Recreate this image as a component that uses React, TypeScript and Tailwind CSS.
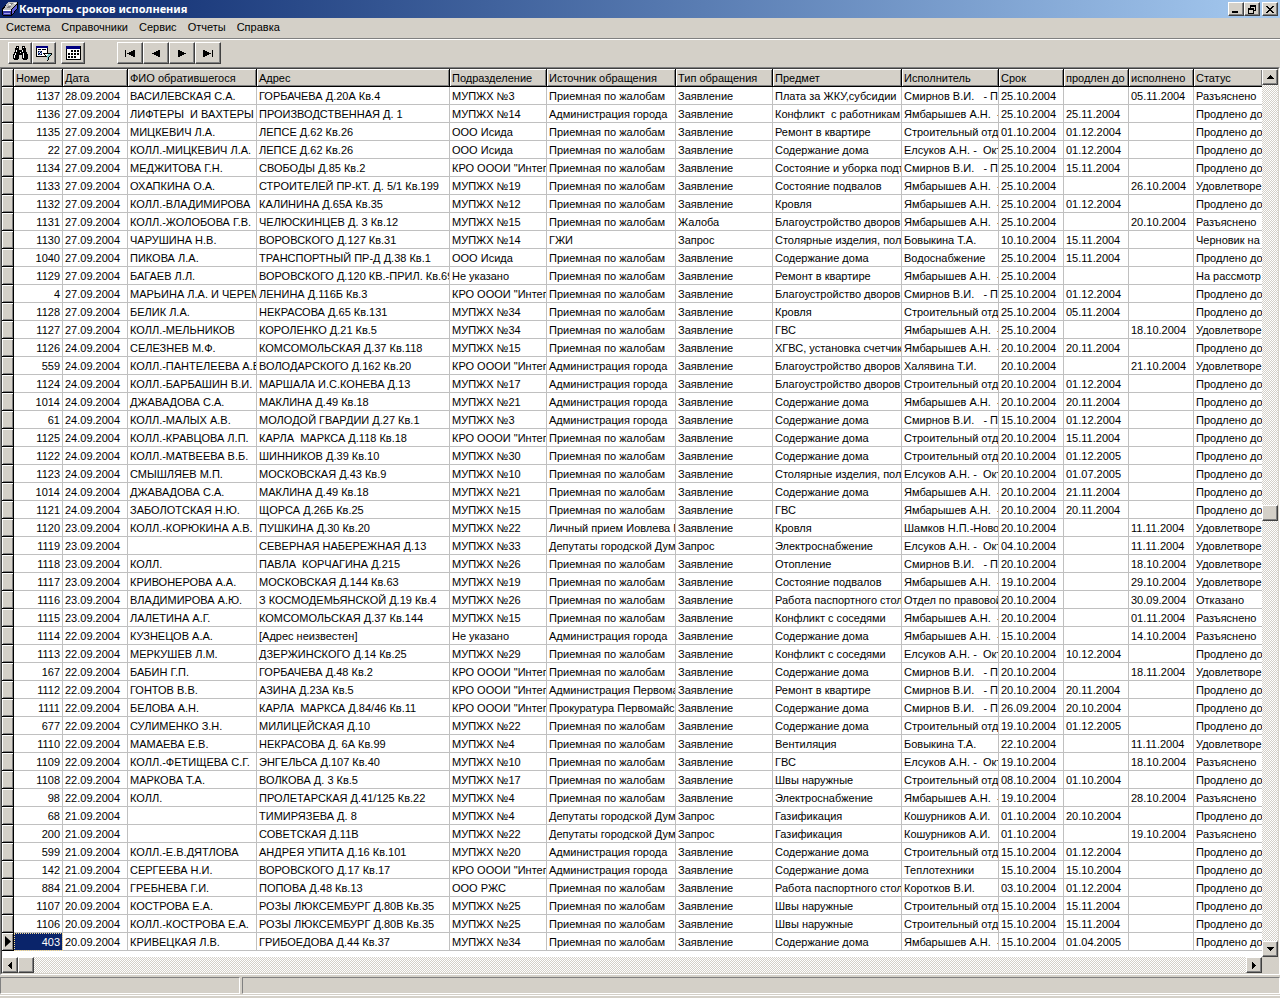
import type { ReactNode } from "react";
import clsx from "clsx";

type Column = { title: string; width: string };

const columns: Column[] = [
  { title: "Номер", width: "w-[49px]" },
  { title: "Дата", width: "w-[65px]" },
  { title: "ФИО обратившегося", width: "w-[129px]" },
  { title: "Адрес", width: "w-[193px]" },
  { title: "Подразделение", width: "w-[97px]" },
  { title: "Источник обращения", width: "w-[129px]" },
  { title: "Тип обращения", width: "w-[97px]" },
  { title: "Предмет", width: "w-[129px]" },
  { title: "Исполнитель", width: "w-[97px]" },
  { title: "Срок", width: "w-[65px]" },
  { title: "продлен до", width: "w-[65px]" },
  { title: "исполнено", width: "w-[65px]" },
  { title: "Статус", width: "" },
];

// values that repeat all over the journal
const PRIEM = "Приемная по жалобам";
const ADM = "Администрация города";
const DUMA = "Депутаты городской Дум";
const ZAYAV = "Заявление";
const ZAPROS = "Запрос";
const KRO = 'КРО ОООИ "Интег';
const DOM = "Содержание дома";
const DVOR = "Благоустройство дворов";
const REMONT = "Ремонт в квартире";
const STOL = "Столярные изделия, пол";
const PASPORT = "Работа паспортного стол";
const SMIRNOV = "Смирнов В.И.   - По";
const YAMB = "Ямбарышев А.Н.  -";
const STROI = "Строительный отд";
const ELSUKOV = "Елсуков А.Н. -  Окт";
const PRODL = "Продлено до";
const UDOVL = "Удовлетворе";
const RAZ = "Разъяснено";

const rows: string[][] = [
  ["1137", "28.09.2004", "ВАСИЛЕВСКАЯ С.А.", "ГОРБАЧЕВА Д.20А Кв.4", "МУПЖХ №3", PRIEM, ZAYAV, "Плата за ЖКУ,субсидии", SMIRNOV, "25.10.2004", "", "05.11.2004", RAZ],
  ["1136", "27.09.2004", "ЛИФТЕРЫ  И ВАХТЕРЫ", "ПРОИЗВОДСТВЕННАЯ Д. 1", "МУПЖХ №14", ADM, ZAYAV, "Конфликт  с работникам", YAMB, "25.10.2004", "25.11.2004", "", PRODL],
  ["1135", "27.09.2004", "МИЦКЕВИЧ Л.А.", "ЛЕПСЕ Д.62 Кв.26", "ООО Исида", PRIEM, ZAYAV, REMONT, STROI, "01.10.2004", "01.12.2004", "", PRODL],
  ["22", "27.09.2004", "КОЛЛ.-МИЦКЕВИЧ Л.А.", "ЛЕПСЕ Д.62 Кв.26", "ООО Исида", PRIEM, ZAYAV, DOM, ELSUKOV, "25.10.2004", "01.12.2004", "", PRODL],
  ["1134", "27.09.2004", "МЕДЖИТОВА Г.Н.", "СВОБОДЫ Д.85 Кв.2", KRO, PRIEM, ZAYAV, "Состояние и уборка подъ", SMIRNOV, "25.10.2004", "15.11.2004", "", PRODL],
  ["1133", "27.09.2004", "ОХАПКИНА О.А.", "СТРОИТЕЛЕЙ ПР-КТ. Д. 5/1 Кв.199", "МУПЖХ №19", PRIEM, ZAYAV, "Состояние подвалов", YAMB, "25.10.2004", "", "26.10.2004", UDOVL],
  ["1132", "27.09.2004", "КОЛЛ.-ВЛАДИМИРОВА", "КАЛИНИНА Д.65А Кв.35", "МУПЖХ №12", PRIEM, ZAYAV, "Кровля", YAMB, "25.10.2004", "01.12.2004", "", PRODL],
  ["1131", "27.09.2004", "КОЛЛ.-ЖОЛОБОВА Г.В.", "ЧЕЛЮСКИНЦЕВ Д. 3 Кв.12", "МУПЖХ №15", PRIEM, "Жалоба", DVOR, YAMB, "25.10.2004", "", "20.10.2004", RAZ],
  ["1130", "27.09.2004", "ЧАРУШИНА Н.В.", "ВОРОВСКОГО Д.127 Кв.31", "МУПЖХ №14", "ГЖИ", ZAPROS, STOL, "Бовыкина Т.А.", "10.10.2004", "15.11.2004", "", "Черновик на"],
  ["1040", "27.09.2004", "ПИКОВА Л.А.", "ТРАНСПОРТНЫЙ ПР-Д Д.38 Кв.1", "ООО Исида", PRIEM, ZAYAV, DOM, "Водоснабжение", "25.10.2004", "15.11.2004", "", PRODL],
  ["1129", "27.09.2004", "БАГАЕВ Л.Л.", "ВОРОВСКОГО Д.120 КВ.-ПРИЛ. Кв.69", "Не указано", PRIEM, ZAYAV, REMONT, YAMB, "25.10.2004", "", "", "На рассмотр"],
  ["4", "27.09.2004", "МАРЬИНА Л.А. И ЧЕРЕМ", "ЛЕНИНА Д.116Б Кв.3", KRO, PRIEM, ZAYAV, DVOR, SMIRNOV, "25.10.2004", "01.12.2004", "", PRODL],
  ["1128", "27.09.2004", "БЕЛИК Л.А.", "НЕКРАСОВА Д.65 Кв.131", "МУПЖХ №34", PRIEM, ZAYAV, "Кровля", STROI, "25.10.2004", "05.11.2004", "", PRODL],
  ["1127", "27.09.2004", "КОЛЛ.-МЕЛЬНИКОВ", "КОРОЛЕНКО Д.21 Кв.5", "МУПЖХ №34", PRIEM, ZAYAV, "ГВС", YAMB, "25.10.2004", "", "18.10.2004", UDOVL],
  ["1126", "24.09.2004", "СЕЛЕЗНЕВ М.Ф.", "КОМСОМОЛЬСКАЯ Д.37 Кв.118", "МУПЖХ №15", PRIEM, ZAYAV, "ХГВС, установка счетчик", YAMB, "20.10.2004", "20.11.2004", "", PRODL],
  ["559", "24.09.2004", "КОЛЛ.-ПАНТЕЛЕЕВА А.В", "ВОЛОДАРСКОГО Д.162 Кв.20", KRO, ADM, ZAYAV, DVOR, "Халявина Т.И.", "20.10.2004", "", "21.10.2004", UDOVL],
  ["1124", "24.09.2004", "КОЛЛ.-БАРБАШИН В.И.", "МАРШАЛА И.С.КОНЕВА Д.13", "МУПЖХ №17", ADM, ZAYAV, DVOR, STROI, "20.10.2004", "01.12.2004", "", PRODL],
  ["1014", "24.09.2004", "ДЖАВАДОВА С.А.", "МАКЛИНА Д.49 Кв.18", "МУПЖХ №21", ADM, ZAYAV, DOM, YAMB, "20.10.2004", "20.11.2004", "", PRODL],
  ["61", "24.09.2004", "КОЛЛ.-МАЛЫХ А.В.", "МОЛОДОЙ ГВАРДИИ Д.27 Кв.1", "МУПЖХ №3", ADM, ZAYAV, DOM, SMIRNOV, "15.10.2004", "01.12.2004", "", PRODL],
  ["1125", "24.09.2004", "КОЛЛ.-КРАВЦОВА Л.П.", "КАРЛА  МАРКСА Д.118 Кв.18", KRO, PRIEM, ZAYAV, DOM, STROI, "20.10.2004", "15.11.2004", "", PRODL],
  ["1122", "24.09.2004", "КОЛЛ.-МАТВЕЕВА В.Б.", "ШИННИКОВ Д.39 Кв.10", "МУПЖХ №30", PRIEM, ZAYAV, DOM, STROI, "20.10.2004", "01.12.2005", "", PRODL],
  ["1123", "24.09.2004", "СМЫШЛЯЕВ М.П.", "МОСКОВСКАЯ Д.43 Кв.9", "МУПЖХ №10", PRIEM, ZAYAV, STOL, ELSUKOV, "20.10.2004", "01.07.2005", "", PRODL],
  ["1014", "24.09.2004", "ДЖАВАДОВА С.А.", "МАКЛИНА Д.49 Кв.18", "МУПЖХ №21", PRIEM, ZAYAV, DOM, YAMB, "20.10.2004", "21.11.2004", "", PRODL],
  ["1121", "24.09.2004", "ЗАБОЛОТСКАЯ Н.Ю.", "ЩОРСА Д.26Б Кв.25", "МУПЖХ №15", PRIEM, ZAYAV, "ГВС", YAMB, "20.10.2004", "20.11.2004", "", PRODL],
  ["1120", "23.09.2004", "КОЛЛ.-КОРЮКИНА А.В.", "ПУШКИНА Д.30 Кв.20", "МУПЖХ №22", "Личный прием Иовлева Г", ZAYAV, "Кровля", "Шамков Н.П.-Ново", "20.10.2004", "", "11.11.2004", UDOVL],
  ["1119", "23.09.2004", "", "СЕВЕРНАЯ НАБЕРЕЖНАЯ Д.13", "МУПЖХ №33", DUMA, ZAPROS, "Электроснабжение", ELSUKOV, "04.10.2004", "", "11.11.2004", UDOVL],
  ["1118", "23.09.2004", "КОЛЛ.", "ПАВЛА  КОРЧАГИНА Д.215", "МУПЖХ №26", PRIEM, ZAYAV, "Отопление", SMIRNOV, "20.10.2004", "", "18.10.2004", UDOVL],
  ["1117", "23.09.2004", "КРИВОНЕРОВА А.А.", "МОСКОВСКАЯ Д.144 Кв.63", "МУПЖХ №19", PRIEM, ZAYAV, "Состояние подвалов", YAMB, "19.10.2004", "", "29.10.2004", UDOVL],
  ["1116", "23.09.2004", "ВЛАДИМИРОВА А.Ю.", "З КОСМОДЕМЬЯНСКОЙ Д.19 Кв.4", "МУПЖХ №26", PRIEM, ZAYAV, PASPORT, "Отдел по правовой", "20.10.2004", "", "30.09.2004", "Отказано"],
  ["1115", "23.09.2004", "ЛАЛЕТИНА А.Г.", "КОМСОМОЛЬСКАЯ Д.37 Кв.144", "МУПЖХ №15", PRIEM, ZAYAV, "Конфликт с соседями", YAMB, "20.10.2004", "", "01.11.2004", RAZ],
  ["1114", "22.09.2004", "КУЗНЕЦОВ А.А.", "[Адрес неизвестен]", "Не указано", ADM, ZAYAV, DOM, YAMB, "15.10.2004", "", "14.10.2004", RAZ],
  ["1113", "22.09.2004", "МЕРКУШЕВ Л.М.", "ДЗЕРЖИНСКОГО Д.14 Кв.25", "МУПЖХ №29", PRIEM, ZAYAV, "Конфликт с соседями", ELSUKOV, "20.10.2004", "10.12.2004", "", PRODL],
  ["167", "22.09.2004", "БАБИН Г.П.", "ГОРБАЧЕВА Д.48 Кв.2", KRO, PRIEM, ZAYAV, DOM, SMIRNOV, "20.10.2004", "", "18.11.2004", UDOVL],
  ["1112", "22.09.2004", "ГОНТОВ В.В.", "АЗИНА Д.23А Кв.5", KRO, "Администрация Первома", ZAYAV, REMONT, SMIRNOV, "20.10.2004", "20.11.2004", "", PRODL],
  ["1111", "22.09.2004", "БЕЛОВА А.Н.", "КАРЛА  МАРКСА Д.84/46 Кв.11", KRO, "Прокуратура Первомайс", ZAYAV, DOM, SMIRNOV, "26.09.2004", "20.10.2004", "", PRODL],
  ["677", "22.09.2004", "СУЛИМЕНКО З.Н.", "МИЛИЦЕЙСКАЯ Д.10", "МУПЖХ №22", PRIEM, ZAYAV, DOM, STROI, "19.10.2004", "01.12.2005", "", PRODL],
  ["1110", "22.09.2004", "МАМАЕВА Е.В.", "НЕКРАСОВА Д. 6А Кв.99", "МУПЖХ №4", PRIEM, ZAYAV, "Вентиляция", "Бовыкина Т.А.", "22.10.2004", "", "11.11.2004", UDOVL],
  ["1109", "22.09.2004", "КОЛЛ.-ФЕТИЩЕВА С.Г.", "ЭНГЕЛЬСА Д.107 Кв.40", "МУПЖХ №10", PRIEM, ZAYAV, "ГВС", ELSUKOV, "19.10.2004", "", "18.10.2004", RAZ],
  ["1108", "22.09.2004", "МАРКОВА Т.А.", "ВОЛКОВА Д. 3 Кв.5", "МУПЖХ №17", PRIEM, ZAYAV, "Швы наружные", STROI, "08.10.2004", "01.10.2004", "", PRODL],
  ["98", "22.09.2004", "КОЛЛ.", "ПРОЛЕТАРСКАЯ Д.41/125 Кв.22", "МУПЖХ №4", PRIEM, ZAYAV, "Электроснабжение", YAMB, "19.10.2004", "", "28.10.2004", RAZ],
  ["68", "21.09.2004", "", "ТИМИРЯЗЕВА Д. 8", "МУПЖХ №4", DUMA, ZAPROS, "Газификация", "Кошурников А.И.", "01.10.2004", "20.10.2004", "", PRODL],
  ["200", "21.09.2004", "", "СОВЕТСКАЯ Д.11В", "МУПЖХ №22", DUMA, ZAPROS, "Газификация", "Кошурников А.И.", "01.10.2004", "", "19.10.2004", RAZ],
  ["599", "21.09.2004", "КОЛЛ.-Е.В.ДЯТЛОВА", "АНДРЕЯ УПИТА Д.16 Кв.101", "МУПЖХ №20", ADM, ZAYAV, DOM, STROI, "15.10.2004", "01.12.2004", "", PRODL],
  ["142", "21.09.2004", "СЕРГЕЕВА Н.И.", "ВОРОВСКОГО Д.17 Кв.17", KRO, ADM, ZAYAV, DOM, "Теплотехники", "15.10.2004", "15.10.2004", "", PRODL],
  ["884", "21.09.2004", "ГРЕБНЕВА Г.И.", "ПОПОВА Д.48 Кв.13", "ООО РЖС", PRIEM, ZAYAV, PASPORT, "Коротков В.И.", "03.10.2004", "01.12.2004", "", PRODL],
  ["1107", "20.09.2004", "КОСТРОВА Е.А.", "РОЗЫ ЛЮКСЕМБУРГ Д.80В Кв.35", "МУПЖХ №25", PRIEM, ZAYAV, "Швы наружные", STROI, "15.10.2004", "15.11.2004", "", PRODL],
  ["1106", "20.09.2004", "КОЛЛ.-КОСТРОВА Е.А.", "РОЗЫ ЛЮКСЕМБУРГ Д.80В Кв.35", "МУПЖХ №25", PRIEM, ZAYAV, "Швы наружные", STROI, "15.10.2004", "15.11.2004", "", PRODL],
  ["403", "20.09.2004", "КРИВЕЦКАЯ Л.В.", "ГРИБОЕДОВА Д.44 Кв.37", "МУПЖХ №34", PRIEM, ZAYAV, DOM, YAMB, "15.10.2004", "01.04.2005", "", PRODL],
];

const current = rows.length - 1;

function RaisedButton({
  label,
  className,
  children,
}: {
  label: string;
  className?: string;
  children?: ReactNode;
}) {
  return (
    <button
      type="button"
      aria-label={label}
      className={clsx(
        "flex shrink-0 items-center justify-center border border-t-white border-l-white border-r-[#404040] border-b-[#404040] bg-[#d4d0c8] shadow-[inset_-1px_-1px_0_#808080]",
        className
      )}
    >
      {children}
    </button>
  );
}

function Glyph({ w, h, d }: { w: number; h: number; d: string }) {
  return (
    <svg width={w} height={h} viewBox={`0 0 ${w} ${h}`} shapeRendering="crispEdges" aria-hidden="true">
      <path d={d} fill="#000" />
    </svg>
  );
}

const LEFT = "M3 0h1v7h-1zM2 1h1v5h-1zM1 2h1v3h-1zM0 3h1v1h-1z";
const RIGHT = "M0 0h1v7h-1zM1 1h1v5h-1zM2 2h1v3h-1zM3 3h1v1h-1z";
const UP = "M3 0h1v1h-1zM2 1h3v1h-3zM1 2h5v1h-5zM0 3h7v1h-7z";
const DOWN = "M0 0h7v1h-7zM1 1h5v1h-5zM2 2h3v1h-3zM3 3h1v1h-1z";

const NAV_LEFT = "M6 0h2v7h-2zM4 1h2v5h-2zM2 2h2v3h-2zM0 3h2v1h-2z";
const NAV_RIGHT = "M0 0h2v7h-2zM2 1h2v5h-2zM4 2h2v3h-2zM6 3h2v1h-2z";
const NAV_FIRST = "M0 0h1v7h-1zM8 0h2v7h-2zM6 1h2v5h-2zM4 2h2v3h-2zM2 3h2v1h-2z";
const NAV_LAST = "M9 0h1v7h-1zM0 0h2v7h-2zM2 1h2v5h-2zM4 2h2v3h-2zM6 3h2v1h-2z";

function AppIcon() {
  return (
    <svg width="16" height="16" viewBox="0 0 16 16" shapeRendering="crispEdges" aria-hidden="true">
      <path d="M0 8L6 1h9l1 1v5l-6 8H1L0 13z" fill="#000" />
      <path d="M6 1h9v1l-6 7H1z" fill="#c0c0c0" />
      <path d="M6 4l2-2h3l-2 2zM4 7l2-2h3l-2 2z" fill="#808080" />
      <path d="M7 3h2v1h-2zM12 2h2v1h-2z" fill="#fff" />
      <path d="M1 10h8v4h-8z" fill="#3838a8" />
      <path d="M10 9l5-6v4l-5 7z" fill="#5c5cd0" />
      <path d="M1 9h8v1h-8z" fill="#fff" />
      <path d="M2 12h6v1h-6z" fill="#9c9cf0" />
    </svg>
  );
}

function BinocularsIcon() {
  return (
    <svg width="15" height="14" viewBox="0 0 15 14" shapeRendering="crispEdges" aria-hidden="true">
      <path
        d="M3 0h3v2h-3zM9 0h3v2h-3zM2 2h4v2h-4zM9 2h4v2h-4zM2 4h11v2h-11zM1 6h13v2h-13zM0 8h6v5h-6zM9 8h6v5h-6zM1 13h4v1h-4zM10 13h4v1h-4zM6 8h3v1h-3z"
        fill="#000"
      />
      <path d="M4 1h1v1h-1zM10 1h1v1h-1zM3 4h1v2h-1zM9 4h1v2h-1zM2 7h1v2h-1zM10 7h1v2h-1zM1 9h1v3h-1zM10 9h1v3h-1zM7 6h1v1h-1z" fill="#fff" />
    </svg>
  );
}

function FilterIcon() {
  return (
    <svg width="16" height="15" viewBox="0 0 16 15" shapeRendering="crispEdges" aria-hidden="true">
      <path d="M0 0h12v11h-12z" fill="#000" />
      <path d="M1 2h10v8h-10z" fill="#fff" />
      <path d="M0 0h12v2h-12z" fill="#000080" />
      <path d="M2 3h3v1h-3zM6 3h4v1h-4zM2 5h4v4h-4z" fill="#000" />
      <path d="M3 5h2v1h-2zM2 6h1v2h-1zM5 6h1v2h-1zM3 8h2v1h-2z" fill="#4060c0" />
      <path d="M3 6h1v1h-1zM4 7h1v1h-1z" fill="#fff" />
      <path d="M7 7h9v2h-1v1h-1v1h-1v3h-1v1h-1v-4h-1v-1h-1v-1h-1v-1h-1z" fill="#000" />
      <path d="M8 8h7v1h-1v1h-1v1h-1v3h-1v-4h-1v-1h-1z" fill="#80d0d0" />
      <path d="M9 8h3v1h-1v1h-1v-1h-1z" fill="#fff" />
    </svg>
  );
}

function CalendarIcon() {
  return (
    <svg width="15" height="14" viewBox="0 0 15 14" shapeRendering="crispEdges" aria-hidden="true">
      <path d="M0 0h15v14h-15z" fill="#000" />
      <path d="M0 0h14v3h-14z" fill="#000080" />
      <path d="M1 3h13v10h-13z" fill="#fff" />
      <path
        d="M5 4h2v2h-2zM8 4h2v2h-2zM11 4h2v2h-2zM2 7h2v2h-2zM5 7h2v2h-2zM8 7h2v2h-2zM11 7h2v2h-2zM2 10h2v2h-2zM5 10h2v2h-2zM8 10h2v2h-2z"
        fill="#000"
      />
    </svg>
  );
}

function TitleBar() {
  return (
    <header className="flex h-[18px] items-center bg-linear-to-r from-[#0a246a] to-[#a6caf0] pr-[2px] pl-[2px]">
      <AppIcon />
      <h1 className="flex-1 pl-px font-['Noto_Sans',sans-serif] text-[11px] leading-[18px] font-bold text-white">
        Контроль сроков исполнения
      </h1>
      <RaisedButton label="Свернуть" className="h-[14px] w-4 items-end pb-[2px]">
        <Glyph w={8} h={2} d="M0 0h6v2h-6z" />
      </RaisedButton>
      <RaisedButton label="Восстановить" className="h-[14px] w-4">
        <Glyph
          w={9}
          h={9}
          d="M2 0h6v2h-6zM2 2h1v1h-1zM7 2h1v4h-1zM6 5h1v1h-1zM0 3h6v2h-6zM0 5h1v4h-1zM5 5h1v4h-1zM0 8h6v1h-6z"
        />
      </RaisedButton>
      <RaisedButton label="Закрыть" className="ml-[2px] h-[14px] w-4">
        <Glyph
          w={9}
          h={7}
          d="M0 0h2v1h-2zM6 0h2v1h-2zM1 1h2v1h-2zM5 1h2v1h-2zM2 2h4v1h-4zM3 3h2v1h-2zM2 4h4v1h-4zM1 5h2v1h-2zM5 5h2v1h-2zM0 6h2v1h-2zM6 6h2v1h-2z"
        />
      </RaisedButton>
    </header>
  );
}

function Menu() {
  return (
    <nav className="flex h-[22px] gap-[11px] border-b border-white pl-[6px] shadow-[inset_0_-1px_0_#808080]">
      {["Система", "Справочники", "Сервис", "Отчеты", "Справка"].map((item) => (
        <button key={item} type="button" className="h-[19px] leading-[19px]">
          {item}
        </button>
      ))}
    </nav>
  );
}

function Toolbar() {
  return (
    <div role="toolbar" className="flex h-[27px] pt-[2px] pl-2">
      <RaisedButton label="Поиск" className="h-[22px] w-6">
        <BinocularsIcon />
      </RaisedButton>
      <RaisedButton label="Фильтр" className="h-[22px] w-6">
        <FilterIcon />
      </RaisedButton>
      <RaisedButton label="Календарь" className="ml-[5px] h-[22px] w-6">
        <CalendarIcon />
      </RaisedButton>
      <div className="ml-8 flex">
        <RaisedButton label="Первая запись" className="h-[22px] w-[26px]">
          <Glyph w={10} h={7} d={NAV_FIRST} />
        </RaisedButton>
        <RaisedButton label="Предыдущая запись" className="h-[22px] w-[26px]">
          <Glyph w={8} h={7} d={NAV_LEFT} />
        </RaisedButton>
        <RaisedButton label="Следующая запись" className="h-[22px] w-[26px]">
          <Glyph w={8} h={7} d={NAV_RIGHT} />
        </RaisedButton>
        <RaisedButton label="Последняя запись" className="h-[22px] w-[26px]">
          <Glyph w={10} h={7} d={NAV_LAST} />
        </RaisedButton>
      </div>
    </div>
  );
}

const raisedCell =
  "border-r border-b border-black bg-[#d4d0c8] shadow-[inset_1px_1px_0_#fff,inset_-1px_-1px_0_#808080]";

function Grid() {
  return (
    <table className="w-full table-fixed border-separate border-spacing-0">
      <thead>
        <tr>
          <th aria-label="Текущая запись" className={clsx(raisedCell, "h-[18px] w-3 p-0")} />
          {columns.map((col, i) => (
            <th
              key={col.title}
              scope="col"
              className={clsx(
                raisedCell,
                col.width,
                "h-[18px] overflow-hidden p-0 pt-[2px] pl-[2px] text-left leading-[15px] font-normal whitespace-pre",
                i === columns.length - 1 && "border-r-0"
              )}
            >
              {col.title}
            </th>
          ))}
        </tr>
      </thead>
      <tbody>
        {rows.map((row, r) => (
          <tr key={r}>
            <td className={clsx(raisedCell, "h-[18px] p-0")}>
              {r === current && (
                <svg width="8" height="11" viewBox="0 0 8 11" className="ml-[3px]" aria-hidden="true">
                  <path d="M0 0l6 5.5L0 11z" fill="#000" />
                </svg>
              )}
            </td>
            {row.map((value, c) => (
              <td
                key={c}
                className={clsx(
                  "h-[18px] overflow-hidden border-b border-[#c0c0c0] p-0 pt-[2px] leading-[15px] whitespace-pre",
                  c < row.length - 1 && "border-r",
                  c === 0 ? "pr-[2px] text-right" : "pl-[2px]",
                  r === current &&
                    c === 0 &&
                    "bg-[#0a246a] text-white outline-1 -outline-offset-1 outline-[#f5db95] outline-dotted"
                )}
              >
                {value}
              </td>
            ))}
          </tr>
        ))}
      </tbody>
    </table>
  );
}

const track =
  "flex bg-[conic-gradient(#fff_25%,#d4d0c8_0_50%,#fff_0_75%,#d4d0c8_0)] bg-size-[2px_2px]";

export default function App() {
  return (
    <div className="flex min-h-screen flex-col bg-[#d4d0c8] font-['Liberation_Sans',Arial,sans-serif] text-[11px] text-black">
      <TitleBar />
      <Menu />
      <Toolbar />
      <main className="flex flex-1 flex-col border-t border-r border-b border-l border-t-[#808080] border-r-white border-b-white border-l-[#808080]">
        <div className="flex flex-1 flex-col border border-t-[#404040] border-r-[#d4d0c8] border-b-[#d4d0c8] border-l-[#404040]">
          <div className="flex flex-1">
            <div className="min-w-0 flex-1 overflow-hidden bg-white pb-[6px]">
              <Grid />
            </div>
            <div className={clsx(track, "w-4 flex-col justify-between")}>
              <RaisedButton label="Вверх" className="size-4">
                <Glyph w={7} h={4} d={UP} />
              </RaisedButton>
              <RaisedButton label="Вертикальная прокрутка" className="size-4" />
              <RaisedButton label="Вниз" className="size-4">
                <Glyph w={7} h={4} d={DOWN} />
              </RaisedButton>
            </div>
          </div>
          <div className="flex pr-4">
            <div className={clsx(track, "h-4 flex-1")}>
              <RaisedButton label="Влево" className="size-4">
                <Glyph w={4} h={7} d={LEFT} />
              </RaisedButton>
              <RaisedButton label="Горизонтальная прокрутка" className="size-4" />
              <RaisedButton label="Вправо" className="ml-auto size-4">
                <Glyph w={4} h={7} d={RIGHT} />
              </RaisedButton>
            </div>
          </div>
        </div>
      </main>
      <footer className="flex h-[23px] gap-[2px] border-b-2 border-[#d4d0c8] pt-[2px] pb-[2px] shadow-[inset_0_-1px_0_#fff]">
        <div className="w-60 border border-t-[#808080] border-r-white border-b-white border-l-[#808080]" />
        <div className="flex-1 border border-t-[#808080] border-r-white border-b-white border-l-[#808080]" />
      </footer>
    </div>
  );
}
